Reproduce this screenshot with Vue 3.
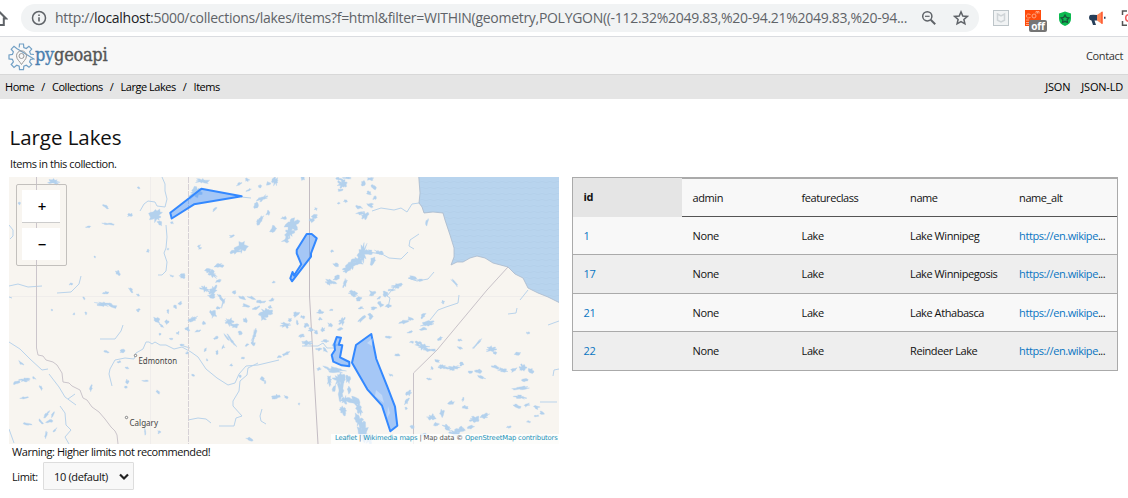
<script setup>
const rows = [
  { id: '1', name: 'Lake Winnipeg' },
  { id: '17', name: 'Lake Winnipegosis' },
  { id: '21', name: 'Lake Athabasca' },
  { id: '22', name: 'Reindeer Lake' },
]

// Inland water: x, y, width, height, rotation
const lakes = [
  [54,182,11,5,10],[19,203,3,3,0],[139,188,3,2,0],[106,207,6,3,30],[130,215,5,3,-20],[156,216,11,11,20],[160,223,6,4,60],[109,224,11,1.5,5],[88,227,5,2,-10],
  [202,181,14,5,0],[95,257,2,2,0],[148,251,3,3,-40],[118,273,5,4,50],[168,249,2,2,0],[172,223,3,2,0],[215,209,6,2.5,-40],[199,246,3,2,-40],
  [242,247,11,10,-20],[236,251,10,5,-20],[232,236,6,2,-10],[260,220,4,9,30],[273,230,6,5,-40],[268,213,3,5,20],[263,198,10,4,-25],[256,205,4,6,20],
  [268,184,5,4,0],[275,181,5,8,10],[247,180,4,3,0],[239,184,5,2,-30],[249,190,5,2,-20],[260,186,3,3,0],[218,265,7,3,-20],[208,271,7,5,20],[183,276,6,5,40],[196,192,15,9,-30],
  [292,224,12,13,30],[289,232,8,12,10],[286,240,7,5,-30],[273,229,5,6,30],[259,222,4,7,30],[284,218,5,3,0],[200,248,3,2,-30],[220,266,8,3,-10],
  [212,274,6,11,-50],[218,281,6,3,0],[205,289,10,5,30],[213,291,6,11,20],[211,296,7,4,0],[221,298,2.5,14,-35],[223,303,2,10,20],[234,292,6,4,-30],
  [243,298,8,3,20],[252,298,9,3,10],[261,302,9,3,0],[272,300,5,3,-20],[270,307,4,3,0],[246,306,7,3,20],[256,308,7,3,-20],[266,313,12,8,-15],[263,318,6,4,20],
  [193,319,8,5,-20],[187,329,6,4,0],[213,314,7,6,40],[219,308,5,3,0],[229,322,8,7,20],[235,326,8,4,0],[245,320,5,4,30],[254,336,3,14,12],[253,344,4,4,0],
  [232,341,1.8,13,-35],[227,338,1.5,9,-40],[216,338,4,3,0],[205,350,2,4,20],[223,347,3,4,20],[240,333,4,3,20],[247,345,4,2,-30],
  [296,314,8,4,-40],[286,325,9,5,0],[290,320,5,3,-30],[297,322,3,5,0],[306,325,5,4,0],[303,317,4,3,0],[320,312,6,5,0],[320,319,4,3,0],[331,310,3,2,0],[330,325,5,4,30],
  [342,321,5,8,20],[340,329,6,3,0],[311,330,5,4,0],[302,336,6,3,-20],[307,343,9,4,0],[316,332,4,4,0],[323,330,4,5,20],[325,341,7,3,0],[319,349,5,3,0],[286,354,8,3,-30],[279,357,4,2,0],
  [335,345,5,4,0],[325,350,5,3,40],[319,369,5,3,0],[327,368,8,3,20],[335,370,17,5,10],[329,380,4,10,-10],[339,379,10,10,40],[341,391,6,21,-4],[345,400,8,7,20],[354,401,13,6,20],[359,408,5,14,-10],
  [343,411,5,8,-25],[359,421,7,13,-20],[364,432,9,18,-15],[369,439,7,9,0],[348,379,4,8,0],[349,390,3,6,0],[334,388,3,7,0],[277,396,6,3,0],[286,397,4,2,30],[299,404,2,2,0],
  [193,375,3,2,20],[262,379,4,3,40],[265,382,2,4,0],[249,439,7,3,20],
  [363,253,8,16,10],[358,261,11,6,0],[352,265,8,12,40],[347,270,8,5,-20],[337,278,8,4,-35],[331,282,10,4,15],[345,283,4,9,25],[353,293,9,5,30],[359,299,5,4,0],[373,261,5,7,30],[370,252,5,4,10],[378,252,7,3,20],
  [343,184,9,9,-15],[339,179,5,3,0],[347,178,7,2,0],[340,190,5,3,0],[363,184,4,6,0],[370,179,7,3,0],[374,187,6,5,40],[369,193,4,4,0],[375,198,5,3,-30],[370,205,6,4,10],[359,207,6,4,20],[365,216,7,7,30],[360,213,7,3,0],[346,201,4,3,0],[339,203,3,2,0],
  [315,216,6,4,-20],[312,220,4,4,0],[316,209,3,3,0],[303,178,5,5,20],[332,251,3,2,0],[336,265,5,3,10],[329,283,4,4,0],[274,282,3,2,-20],
  [388,337,9,3,0],[404,322,9,3,-10],[410,319,6,3,20],[428,324,13,5,-8],[424,329,7,3,0],[423,316,6,3,-40],[410,332,5,2,-20],[423,347,12,6,15],[430,350,11,3,0],[418,343,6,4,20],[440,339,5,3,-30],[460,340,4,2,0],[460,348,5,2,20],
  [477,344,2,11,40],[491,349,9,5,-10],[495,353,5,2,20],[517,354,8,3,-5],[528,333,3,2,0],[437,361,7,3,30],[443,367,9,4,10],[453,368,11,4,-10],[462,364,5,4,-30],[432,368,3,3,0],[429,379,4,2,0],
  [470,372,5,2,0],[478,371,7,4,0],[481,377,8,2,20],[496,367,9,3,20],[503,370,9,4,10],[514,370,7,3,-20],[523,368,6,7,20],[531,371,6,5,0],[525,380,5,3,0],[521,388,14,3,-8],[520,397,11,3,8],[517,406,9,3,20],[527,405,5,3,-20],[536,407,6,4,0],[542,413,5,4,30],
  [475,419,10,5,-10],[484,416,10,4,-20],[432,417,8,5,0],[442,413,4,8,10],[436,424,7,3,0],[451,403,6,3,-20],[465,407,6,3,10],[463,399,2,4,20],[447,427,9,4,30],[460,430,11,5,-25],[455,434,12,4,20],[471,427,8,3,-20],[424,435,6,3,0],[412,427,4,3,0],
  [409,393,4,6,40],[407,401,3,7,30],[406,408,2,3,0],[385,293,5,6,20],[380,304,7,4,30],[389,306,6,3,0],[379,298,5,2,-30],[372,293,6,5,0],[361,308,5,2,0],[374,308,6,3,0],[371,316,5,7,50],[362,319,9,3,-40],[397,355,5,2,0],[391,375,4,2,20],
  [443,302,3,3,0],[413,278,9,3,15],[420,280,6,2,0],[397,286,10,4,-10],[391,290,7,2,0],[427,222,2,6,10],[381,253,4,3,0],[455,283,2,10,-40],
  [106,293,6,3,0],[103,304,13,4,5],[112,306,8,4,15],[84,298,4,2,50],[71,284,3,2,-20],[52,310,2,2,0],[74,314,2,2,0],[86,313,2,3,0],[138,310,4,3,0],[131,290,3,7,-30],[138,295,4,2,20],
  [157,320,7,4,30],[162,326,6,2,40],[167,322,4,4,0],[180,303,5,3,-40],[175,307,4,3,0],[168,311,2,5,0],[107,352,5,2,20],[123,351,6,3,-20],[127,368,4,2,20],[127,382,4,5,30],[126,387,3,2,0],[91,388,2,6,15],[145,381,5,2,0],[158,392,2,4,-40],[119,362,4,2,-10],
  [263,379,3,3,0],[275,397,7,3,-10],[145,431,1.5,7,0],[159,432,3,3,0],[181,276,3,2,0],[172,276,4,2,20],[178,333,3,3,0],[160,334,2,2,0],[171,339,3,2,0],[182,345,4,2,0],[198,331,5,2,-10],[204,323,3,4,0],[187,353,3,2,-40],[217,352,3,4,20],[231,365,3,2,0],[243,358,3,2,0],[240,376,3,3,30],[207,360,2,2,0],
  [16,383,8,3,-20],[25,380,10,3,0],[34,378,5,2,30],[24,398,8,2,-10],[41,388,2,5,-30],[46,415,2,11,40],[50,421,7,3,-10],[41,422,2,6,-40],[53,414,2,6,20],[27,424,8,2,10],[46,435,2,9,5],[55,430,2,5,30],[21,363,2,6,-50],
  [509,427,4,2,0],[514,436,3,2,0],[536,416,5,2,-10],[545,436,6,2,10],[529,422,4,2,10],[412,342,4,2,0],
]

// Deterministic ragged outline around an ellipse
function blob([x, y, w, h, rot], i) {
  const n = w + h > 12 ? 22 : 11
  const a = (rot * Math.PI) / 180
  const pts = []
  for (let k = 0; k < n; k++) {
    const t = (k / n) * Math.PI * 2
    const noise = Math.abs(Math.sin(i * 12.9898 + k * 78.233) * 43758.5453) % 1
    const r = 0.22 + noise * 0.5
    const px = Math.cos(t) * w * r
    const py = Math.sin(t) * h * r
    pts.push(`${(x + px * Math.cos(a) - py * Math.sin(a)).toFixed(1)} ${(y + px * Math.sin(a) + py * Math.cos(a)).toFixed(1)}`)
  }
  return `M${pts.join('L')}Z`
}
const lakePath = lakes.map(blob).join('')
</script>

<template>
  <div class="page">
    <div class="chrome">
      <svg class="home" width="8" height="28" viewBox="0 4 8 28"><path d="M-6 18.500L0 12.500L6 18.500H3.800V25H-4" fill="none" stroke="#5f6368" stroke-width="2" /></svg>
      <div class="pill">
        <svg class="info" width="16" height="16" viewBox="0 0 16 16"><circle cx="8" cy="8" r="6.500" fill="none" stroke="#5f6368" stroke-width="1.500" /><path d="M8 7.200V11.500M8 4.500V6" stroke="#5f6368" stroke-width="1.600" /></svg>
        <span class="url">http://<b>localhost</b>:5000/collections/lakes/items?f=html&amp;filter=WITHIN(geometry,POLYGON((-112.32%2049.83,%20-94.21%2049.83,%20-94...</span>
        <svg class="loupe" width="16" height="16" viewBox="0 0 16 16" fill="none" stroke="#5f6368"><circle cx="6.300" cy="6.300" r="4.600" stroke-width="1.500" /><path d="M9.700 9.700L14.200 14.200" stroke-width="2" /><path d="M4 6.300H8.600" stroke-width="1.200" /></svg>
        <svg class="star" width="16" height="16" viewBox="0 0 16 16"><path d="M8 1.900L9.800 6L14.300 6.400L10.900 9.400L11.900 13.800L8 11.500L4.100 13.800L5.100 9.400L1.700 6.400L6.200 6Z" fill="none" stroke="#5f6368" stroke-width="1.500" /></svg>
      </div>
      <svg class="ext" width="149" height="36" viewBox="979 0 149 36">
        <rect x="993.500" y="10.500" width="15" height="15" fill="#f1f3f4" stroke="#bdc5c9" />
        <path d="M997.500 14L1001 16L1004.500 14V20.200L1001 22L997.500 20.200Z" fill="none" stroke="#cfd4d7" stroke-width="1.500" />
        <rect x="1025" y="10" width="16" height="16" fill="#ff4b0b" />
        <g fill="none" stroke="#ffa47f" stroke-width="1"><path d="M1030.500 14.500Q1026.500 13 1026.500 16Q1026.500 19 1030.500 17.500" /><circle cx="1034" cy="16" r="2" /><path d="M1036 13.500V11.500H1037.500V13.500M1037.500 11.500H1039V13.500M1026 20H1029M1026 22.500H1029M1026 24.500H1029" /></g>
        <rect x="1029" y="20" width="18" height="12" rx="2" fill="#757575" />
        <text x="1038" y="29.700" text-anchor="middle" class="off">off</text>
        <path d="M1065 11.500L1071 13.500V19Q1071 24 1065 26Q1059 24 1059 19V13.500Z" fill="#0dbb51" />
        <path d="M1065 15L1066.300 17.300L1069 17.800L1067.100 19.800L1067.500 22.500L1065 21.300L1062.500 22.500L1062.900 19.800L1061 17.800L1063.700 17.300Z" fill="none" stroke="#17573b" stroke-width="1.300" />
        <path d="M1090 15Q1093 14.300 1097 15V20.500H1094.500L1096 25H1093L1091.500 20.500Q1089 20 1089 18Q1089 15.800 1090 15Z" fill="#263e59" />
        <path d="M1097 15L1102 11.500V24L1097 20.500Z" fill="#ff8656" /><path d="M1101 12.200L1102.800 11.500V24L1101 23.300Z" fill="#ff6036" /><path d="M1104 17.700H1105.500" stroke="#263e59" stroke-width="2" />
        <path d="M1127 11H1122.500V15M1122.500 21V25.300H1127" fill="none" stroke="#555" stroke-width="1.500" /><circle cx="1129" cy="18" r="3.300" fill="none" stroke="#f35b5b" stroke-width="1.500" />
      </svg>
    </div>

    <header class="header">
      <div class="logo">
        <svg width="27" height="28" viewBox="0 0 27 28" fill="none"><path d="M11.200 4.500L11.500 1H15.500L15.800 4.500L18.300 5.500L20.900 3.200L23.700 6L21.600 8.700L22.600 11.200L26 11.500M26 16L22.600 16.300L21.600 18.800L23.800 21.500L21 24.300L18.300 22.200L15.800 23.200L15.500 26.700H11.500L11.200 23.200L8.700 22.200L6 24.400L3.200 21.500L5.400 18.800L4.400 16.300L1 15.900V12L4.400 11.400L5.400 8.900L3.200 6.200L6 3.300L8.700 5.500Z" stroke="#72a0c5" stroke-width="1.200" /><path d="M13.500 21.500C12 18.500 8.500 16.500 8.500 12.800A5 5 0 0 1 18.500 12.800C18.500 16.500 15 18.500 13.500 21.500Z" stroke="#999" /><circle cx="13.500" cy="13" r="2.500" stroke="#999" /></svg>
        <span class="word"><i>py</i>geoapi</span>
      </div>
      <span class="contact">Contact</span>
    </header>

    <nav class="crumbs">
      <span class="trail"><span>Home</span><s>/</s><span>Collections</span><s>/</s><span>Large Lakes</span><s>/</s><span>Items</span></span>
      <span class="formats"><span>JSON</span><span>JSON-LD</span></span>
    </nav>

    <main class="main">
      <h1>Large Lakes</h1>
      <p class="desc">Items in this collection.</p>
      <div class="cols">
        <section class="left">
          <div class="map">
            <svg width="550" height="267" viewBox="9 177 550 267">
              <defs><pattern id="waves" width="8" height="6" patternUnits="userSpaceOnUse"><rect width="8" height="6" fill="#b8d4ee" /><path d="M0 2Q2 3.500 4 2T8 2" fill="none" stroke="#b0cde8" stroke-width=".6" /></pattern></defs>
              <rect x="9" y="177" width="550" height="267" fill="#f8f5f0" />
              <path d="M9 296.500H559M150.500 177V444" stroke="#f0edeb" />
              <g fill="none" stroke="#b9d3eb" stroke-width="1">
                <path d="M162 177L165 184L165 191L167 199L165 207L157 206L155 202L148 201L144 204L140 211M166 225L167 237L166 248L164 253L167 262L166 271L162 275L158 275M241 197L251 198" />
                <path d="M9 286L18 284L28 287L42 286M81 276L79 284L71 292L57 293M123 325L121 331L115 339L100 339" />
                <path d="M112 386L109 374L110 369L115 360L125 358L134 359L136 353L143 349L146 342L149 342L152 344L155 342L160 345L166 345L174 349L182 347L191 352L198 357L206 369L217 378L228 385L235 383L239 374L246 366L258 365L279 360" />
                <path d="M258 363L248 368L247 375L240 381L239 391L233 401L233 406L242 416L236 418L234 426L219 426M188 420L198 418L206 419L211 423M262 409L260 416L261 421L266 424M9 342L20 349L30 359L42 370L48 369M9 429L14 443" />
                <path d="M49 374L59 387L65 397L76 405M68 399L75 394M60 406L65 413L66 425L71 430L65 437L69 444M9 297L12 298M372 211L381 208L394 210L401 208L407 212L412 204L419 203M419 234L410 240L409 246L414 249M368 252L382 254L389 258L401 259L408 252M408 278L417 281L428 279L434 272M459 295L458 303L446 307L438 310L430 320M388 308L390 298L387 296L396 285M520 300L528 290M508 314L516 313L517 308M548 325L559 321M553 376L554 370L559 369M540 402L557 402" />
                <path d="M302 346H318L323 343L327 348L335 348M180 345L190 348M9 225L13 230L13 236L10 239" />
              </g>
              <g fill="none" stroke="#cbc5cb" stroke-width="1">
                <path d="M36.500 177V348L38 355L43 356L46 360L53 362L57 365L62 373L63 382L69 383L72 386L80 390L83 398L87 400L92 407L99 412L105 419L111 427L115 431L117 435L118 444" />
                <path d="M188.500 177V444" stroke="#d6d1d6" stroke-dasharray="6 1" /><path d="M309.500 177V296L318 444" stroke="#c3bcc3" /><path d="M508 267L487 290L437 350L413.500 373V444" stroke="#c8c2c8" />
              </g>
              <path :d="lakePath" fill="#b3d1ed" stroke="#b3d1ed" stroke-width=".35" />
              <path d="M418.700 176L420 193L419 203L422 207L424 213L433 212L443 213L445 220L450 235L454 248L454 257L451 265L457 262L463 262L470 258L477 256L485 258L493 263L508 267L515 274L523 278L528 288L538 293L548 297L560 303V176Z" fill="url(#waves)" stroke="#a9b9cb" stroke-width=".8" />
              <g fill="#3388ff" fill-opacity=".42" stroke="#3388ff" stroke-width="2" stroke-linejoin="round">
                <path d="M201.300 188.700L241.700 196.300L194 204.300L171.700 218.500L170.300 212.700Z" />
                <path d="M306.700 234L311.700 234L316.700 238.300L311 253.300L311 256.700L292 281.300L290.300 278.300L292.500 272L294 275.500L301.300 264.300L296.700 253.300L296.700 250Z" />
                <path d="M336.700 337L341 337.700L338.700 344.700L342.300 345.300L340 357.300L349.300 362V366.300L341.700 365.300L333.300 361.700L331.700 355L335 350L334.300 344Z" />
                <path d="M371.300 334L356 345L352 362.700L367.300 389.300L382 405.700L390.300 431.300L397.300 425.700L395 406.700L387.300 386.700L376.300 359Z" />
              </g>
              <path d="M373 338L367 343L372 346ZM376 390L382 395L384 403L375 396ZM388 406L390 413L387 418Z" fill="#fff" fill-opacity=".3" />
              <g fill="#fff" stroke="#666" stroke-width=".8"><circle cx="135.500" cy="355.500" r="1.200" /><circle cx="126.500" cy="417.500" r="1.200" /></g>
              <text class="city" x="138.500" y="364" textLength="38.500" lengthAdjust="spacingAndGlyphs">Edmonton</text>
              <text class="city" x="129.500" y="426" textLength="28.500" lengthAdjust="spacingAndGlyphs">Calgary</text>
            </svg>
            <div class="zoom"><button>+</button><button>−</button></div>
            <div class="attr"><a>Leaflet</a> | <a>Wikimedia maps</a> | Map data © <a>OpenStreetMap contributors</a></div>
          </div>
          <p class="warn">Warning: Higher limits not recommended!</p>
          <div class="limit"><label>Limit:</label>
            <div class="select"><span>10 (default)</span><svg width="10" height="8" viewBox="0 0 10 8"><path d="M1 1.500L5 5.500L9 1.500" fill="none" stroke="#222" stroke-width="2.200" /></svg></div>
          </div>
        </section>
        <div class="table">
          <div class="row head"><span class="id">id</span><span>admin</span><span>featureclass</span><span>name</span><span>name_alt</span></div>
          <div v-for="r in rows" :key="r.id" class="row"><span><a>{{ r.id }}</a></span><span>None</span><span>Lake</span><span>{{ r.name }}</span><span><a class="wiki">https://en.wikipe<em>...</em></a></span></div>
        </div>
      </div>
    </main>
  </div>
</template>

<style>
body { margin: 0; background: #fff; overflow: hidden; }
</style>

<style scoped>
* { box-sizing: border-box; }
.page { width: 1128px; height: 498px; overflow: hidden; background: #fff; color: #111; font: 11px/16px "Open Sans", "Noto Sans", sans-serif; letter-spacing: -.43px; }
svg { display: block; flex: none; }
.chrome { display: flex; height: 37px; border-bottom: 1px solid #dadce0; }
.home { margin: 4px 13px 0 0; }
.pill { display: flex; align-items: center; width: 958px; height: 28px; margin-top: 4px; border-radius: 14px; background: #f1f3f4; padding-left: 10px; }
.url { width: 852px; margin-left: 8px; font-size: 14px; line-height: 20px; letter-spacing: -.29px; color: #5f6368; white-space: nowrap; }
.url b { font-weight: 400; color: #202124; }
.loupe { margin-left: 14px; }
.star { margin-left: 16px; }
.off { font: bold 10px "Open Sans", sans-serif; fill: #fff; letter-spacing: -.2px; }
.header { display: flex; align-items: center; justify-content: space-between; height: 38px; border-bottom: 1px solid #d8d8d8; background: #f8f8f8; padding: 0 5px 0 8px; }
.logo { display: flex; align-items: center; padding-top: 2px; }
.word { font: 18px/24px "DejaVu Serif Condensed", "DejaVu Serif", serif; letter-spacing: -.25px; color: #555; margin-top: -4px; white-space: nowrap; -webkit-text-stroke: .35px currentColor; }
.word i { font-style: normal; color: #4a80b0; }
.contact { color: #333; letter-spacing: -.35px; }
.crumbs { display: flex; align-items: center; justify-content: space-between; height: 24px; background: #e5e5e5; padding: 0 5px; color: #000; }
.trail { display: flex; letter-spacing: -.47px; }
.trail s { text-decoration: none; width: 17.800px; text-align: center; }
.formats { display: flex; gap: 11px; letter-spacing: -.2px; }
.main { padding: 25px 10px 0 9px; }
h1 { margin: 0; font: 500 20.500px/26px "Open Sans", "Noto Sans", sans-serif; letter-spacing: -.05px; padding-left: .5px; }
.desc { margin: 6px 0 5px 1px; line-height: 16px; }
.cols { display: flex; gap: 13px; }
.left { width: 550px; }
.map { position: relative; width: 550px; height: 267px; overflow: hidden; }
.city { font: 8.500px "Noto Sans", sans-serif; fill: #444; letter-spacing: 0; }
.zoom { position: absolute; left: 7px; top: 7px; width: 51px; height: 82px; border: 1px solid #c3c0bd; border-radius: 2px; padding: 5px; display: flex; flex-direction: column; gap: 5px; }
.zoom button { display: block; width: 38px; height: 33px; padding: 0 0 0 2px; border: 0; border-bottom: 1px solid #ccc; background: #fff; color: #000; font: 600 15px/32px "Open Sans", sans-serif; }
.zoom button + button { height: 32px; border: 0; }
.attr { position: absolute; right: 0; bottom: 0; width: 228px; height: 10px; padding-left: 4px; background: rgba(255,255,255,.75); color: #555; font: 6.800px/9px "DejaVu Sans", sans-serif; letter-spacing: -.15px; white-space: nowrap; }
.attr a { color: #2191b7; }
.warn { margin: 0 0 0 3px; line-height: 16px; }
.limit { display: flex; align-items: center; margin: 2px 0 0 3px; }
.limit label { width: 31px; padding-top: 1px; }
.select { display: flex; align-items: center; justify-content: space-between; width: 91px; height: 28px; border: 1px solid #ddd; border-radius: 1px; background: #f8f8f8; padding: 1px 4px 0 10px; letter-spacing: -.35px; }
.table { width: 546px; height: 194px; border: 1px solid #aaa; }
.row { display: grid; grid-template-columns: 109px 109px 108.500px 109px 108.500px; height: 38.300px; border-bottom: 1px solid #aaa; background: #f8f8f8; }
.row > span { padding-left: 10.600px; line-height: 38px; white-space: nowrap; }
.row:nth-child(odd):not(.head) { background: #eee; }
.row:last-child { border-bottom: 0; }
.head { height: 39px; border-bottom-color: #555; }
.head > span { border-top: 1px solid #aaa; }
.head > .id { border: 0; background: #e5e5e5; font-weight: 700; }
.row a { color: #0875c2; }
.row em { font-style: normal; color: #111; }
</style>
